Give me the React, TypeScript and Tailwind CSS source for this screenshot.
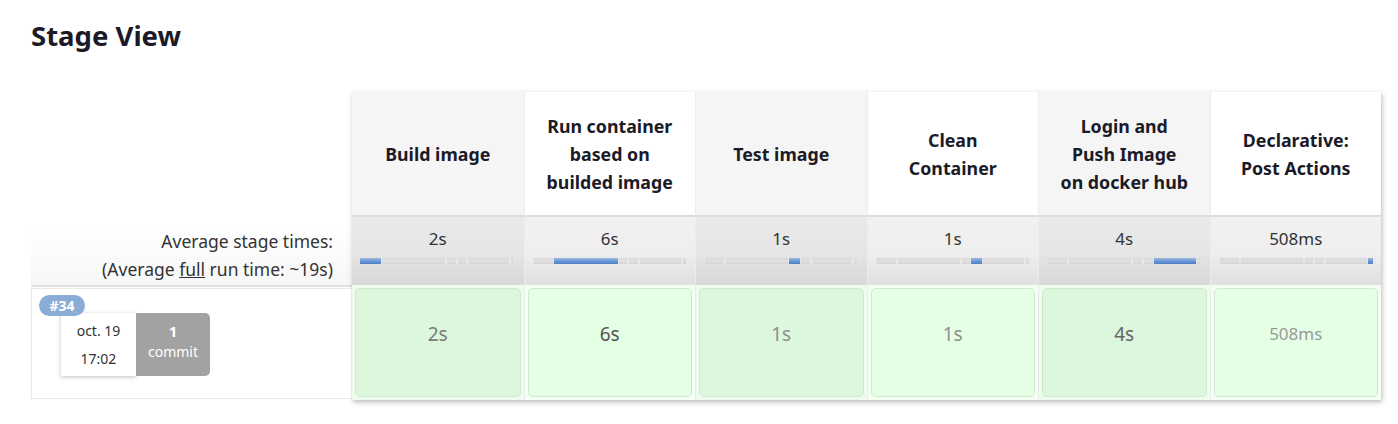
import React from "react";

const stages = [
  { name: ["Build image"], avg: "2s", run: "2s", w: 2, runColor: "text-[#7a7a7a]", runSize: "text-[19px]" },
  { name: ["Run container", "based on", "builded image"], avg: "6s", run: "6s", w: 6, runColor: "text-[#555]", runSize: "text-[19px]" },
  { name: ["Test image"], avg: "1s", run: "1s", w: 1, runColor: "text-[#8f8f8f]", runSize: "text-[19px]" },
  { name: ["Clean", "Container"], avg: "1s", run: "1s", w: 1, runColor: "text-[#8f8f8f]", runSize: "text-[19px]" },
  { name: ["Login and", "Push Image", "on docker hub"], avg: "4s", run: "4s", w: 4, runColor: "text-[#666]", runSize: "text-[19px]" },
  { name: ["Declarative:", "Post Actions"], avg: "508ms", run: "508ms", w: 0.5, runColor: "text-[#9a9a9a]", runSize: "text-[17px]" },
];

const total = stages.reduce((a, s) => a + s.w, 0);

function Bar({ active }: { active: number }) {
  return (
    <div className="flex h-[6px] w-full overflow-hidden">
      {stages.map((s, i) => (
        <div
          key={i}
          style={{ width: `${(s.w / total) * 100}%` }}
          className={
            i === active
              ? "h-full bg-gradient-to-b from-[#9dbbe6] via-[#6d98d6] to-[#4f7fc6]"
              : "h-full border-x border-[#e6e6e6] bg-gradient-to-b from-[#d8d8d8] via-[#e0e0e0] to-[#d4d4d4]"
          }
        />
      ))}
    </div>
  );
}

export default function App() {
  const font = { fontFamily: '"Noto Sans", "Open Sans", sans-serif' };
  return (
    <div className="w-[1398px] h-[424px] bg-white pl-[31px]" style={font}>
      <h1 className="pt-[19px] text-[27.5px] font-bold leading-[34px] text-[#1b1b27]">Stage View</h1>
      <div className="mt-[39px] flex">
        {/* left column */}
        <div className="flex w-[321px] flex-col">
          <div className="h-[133px]" />
          <div className="flex h-[62px] flex-col items-end justify-center border-b-2 border-[#e2e2e2] bg-gradient-to-b from-white to-[#f7f7f7] pr-[19px] text-[17.5px] leading-[28px] text-[#333]">
            <div>Average stage times:</div>
            <div>
              (Average <span className="underline">full</span> run time: ~19s)
            </div>
          </div>
          <div className="relative mt-[1px] h-[111px] border border-[#e8e8e8] bg-white">
            <div className="absolute left-[7px] top-[6px] z-10 flex h-[21px] w-[46px] items-center justify-center rounded-full bg-[#8aadd5] text-[14px] font-bold text-white">
              #34
            </div>
            <div className="ml-[29px] mt-[24px] flex h-[63px]">
              <div className="flex w-[75px] flex-col items-center justify-center bg-white text-[14px] leading-[28px] text-[#333] shadow-[0_1px_4px_rgba(0,0,0,0.25)]">
                <div>oct. 19</div>
                <div>17:02</div>
              </div>
              <div className="flex w-[74px] flex-col items-center rounded-r-[5px] bg-[#a2a2a2] pt-[8px] text-white">
                <div className="text-[15px] font-bold leading-[20px]">1</div>
                <div className="text-[14px] leading-[22px]">commit</div>
              </div>
            </div>
          </div>
        </div>

        {/* stage table */}
        <div className="grid w-[1029px] grid-cols-6 shadow-[1px_2px_5px_rgba(0,0,0,0.28)]">
          {stages.map((s, i) => {
            const odd = i % 2 === 0;
            return (
              <div key={i} className={"flex flex-col " + (i > 0 ? "border-l border-[#ececec]" : "")}>
                <div
                  className={
                    "flex h-[123px] flex-col items-center justify-center text-center text-[17.8px] font-bold leading-[28px] text-[#1b1b27] " +
                    (odd ? "bg-[#f5f5f5]" : "bg-white")
                  }
                >
                  {s.name.map((l, j) => (
                    <div key={j}>{l}</div>
                  ))}
                </div>
                <div
                  className={
                    "flex h-[70px] flex-col items-center border-t-2 border-[#dcdcdc] px-[8px] pt-[11px] " +
                    (odd
                      ? "bg-gradient-to-b from-[#e9e9e9] via-[#e6e6e6] to-[#d8d8d8]"
                      : "bg-gradient-to-b from-[#f1f1f1] via-[#efefef] to-[#e0e0e0]")
                  }
                >
                  <div className="text-[17px] leading-[22px] text-[#333]">{s.avg}</div>
                  <div className="mt-[8px] w-full">
                    <Bar active={i} />
                  </div>
                </div>
                <div className={"h-[115px] p-[3px] " + (odd ? "bg-[#f0fbf0]" : "bg-[#f3fff3]")}>
                  <div
                    className={
                      "flex h-full items-start justify-center rounded-[5px] border border-[#cfe8cf] pt-[32px] " +
                      (odd ? "bg-[#dcf7dc]" : "bg-[#e4ffe4]")
                    }
                  >
                    <span className={s.runSize + " leading-[26px] " + s.runColor}>{s.run}</span>
                  </div>
                </div>
              </div>
            );
          })}
        </div>
      </div>
    </div>
  );
}
